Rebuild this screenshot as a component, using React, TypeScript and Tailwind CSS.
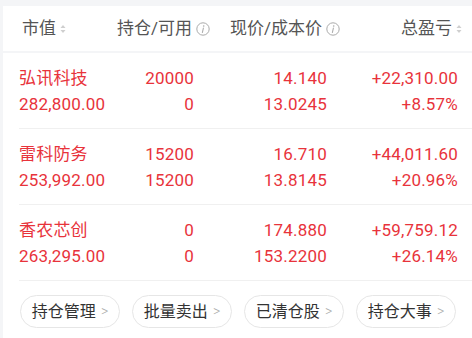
import React from 'react';

interface Holding {
  name: string;
  value: string;
  qty: string;
  avail: string;
  price: string;
  cost: string;
  pnl: string;
  pct: string;
}

const holdings: Holding[] = [
  { name: '弘讯科技', value: '282,800.00', qty: '20000', avail: '0', price: '14.140', cost: '13.0245', pnl: '+22,310.00', pct: '+8.57%' },
  { name: '雷科防务', value: '253,992.00', qty: '15200', avail: '15200', price: '16.710', cost: '13.8145', pnl: '+44,011.60', pct: '+20.96%' },
  { name: '香农芯创', value: '263,295.00', qty: '0', avail: '0', price: '174.880', cost: '153.2200', pnl: '+59,759.12', pct: '+26.14%' },
];

const actions = ['持仓管理', '批量卖出', '已清仓股', '持仓大事'];

const font = "font-['Roboto','Noto_Sans_CJK_SC',sans-serif]";

function SortIcon() {
  return (
    <svg width="6" height="10" viewBox="0 0 6 10" className="ml-1">
      <path d="M3 1 L5.5 4 H0.5 Z" fill="#cfcfcf" />
      <path d="M3 9 L5.5 6 H0.5 Z" fill="#cfcfcf" />
    </svg>
  );
}

function InfoIcon() {
  return (
    <svg width="14" height="14" viewBox="0 0 14 14" className="ml-1">
      <circle cx="7" cy="7" r="6.2" fill="none" stroke="#aaa" strokeWidth="1" />
      <circle cx="7.7" cy="4" r="0.8" fill="#aaa" />
      <path d="M7.4 6 L6.4 10.5" stroke="#aaa" strokeWidth="1.1" strokeLinecap="round" />
    </svg>
  );
}

export default function App() {
  return (
    <div className={`h-[338px] w-[472px] overflow-hidden bg-[#f4f5f7] pl-[3px] pt-[6px] ${font}`}>
      <div className="flex h-[45px] items-center bg-white pr-[10px] text-[17px] text-[#555]">
        <div className="flex w-[112px] items-center pl-[19px]">
          市值
          <SortIcon />
        </div>
        <div className="flex w-[95px] items-center justify-end">
          持仓/可用
          <InfoIcon />
        </div>
        <div className="flex w-[130px] items-center justify-end">
          现价/成本价
          <InfoIcon />
        </div>
        <div className="flex flex-1 items-center justify-end">
          总盈亏
          <SortIcon />
        </div>
      </div>

      <div className="mt-[2px] bg-white">
        {holdings.map((h) => (
          <div key={h.name} className="ml-[16px] border-b border-[#f0f0f0] pb-[11px] pr-[14px] pt-[12px] text-[17px] leading-[26px] tracking-[0.2px] text-[#e8333b]">
            <div className="flex">
              <div className="w-[96px]">
                <div>{h.name}</div>
                <div>{h.value}</div>
              </div>
              <div className="w-[79px] text-right">
                <div>{h.qty}</div>
                <div>{h.avail}</div>
              </div>
              <div className="w-[133px] text-right">
                <div>{h.price}</div>
                <div>{h.cost}</div>
              </div>
              <div className="flex-1 text-right">
                <div>{h.pnl}</div>
                <div>{h.pct}</div>
              </div>
            </div>
          </div>
        ))}
        <div className="flex gap-[12px] pb-[10px] pl-[17px] pt-[14px]">
          {actions.map((a) => (
            <div
              key={a}
              className="flex h-[33px] w-[100px] items-center justify-center rounded-full border border-[#e6e6e6] text-[16px] text-[#333]"
            >
              {a}
              <span className="ml-[5px] text-[14px] font-light text-[#aaa]">&gt;</span>
            </div>
          ))}
        </div>
      </div>
    </div>
  );
}
